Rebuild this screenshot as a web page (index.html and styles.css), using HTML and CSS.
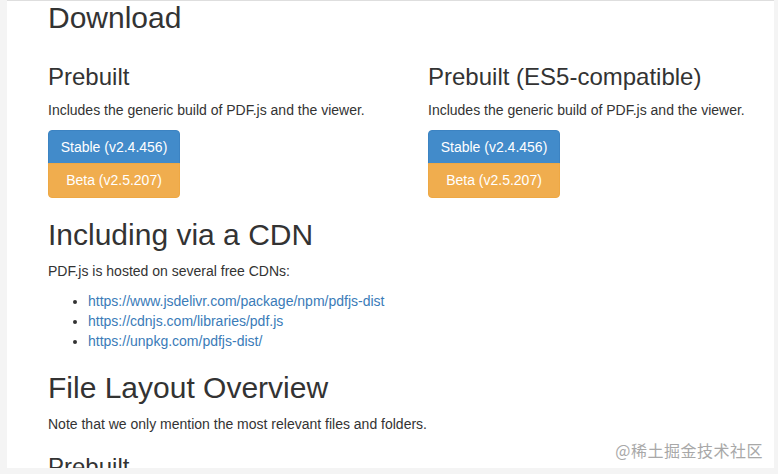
FILE: index.html
```html
<!DOCTYPE html>
<html lang="en">
<head>
<meta charset="utf-8">
<title>PDF.js - Getting Started</title>
<link rel="stylesheet" href="styles.css">
</head>
<body>
<div class="frame">
  <main class="panel">
    <h2 class="first">Download</h2>
    <div class="row">
      <section class="col">
        <h3>Prebuilt</h3>
        <p>Includes the generic build of PDF.js and the viewer.</p>
        <div class="btn-group">
          <a class="btn btn-primary">Stable (v2.4.456)</a>
          <a class="btn btn-warning">Beta (v2.5.207)</a>
        </div>
      </section>
      <section class="col">
        <h3>Prebuilt (ES5-compatible)</h3>
        <p>Includes the generic build of PDF.js and the viewer.</p>
        <div class="btn-group">
          <a class="btn btn-primary">Stable (v2.4.456)</a>
          <a class="btn btn-warning">Beta (v2.5.207)</a>
        </div>
      </section>
    </div>
    <h2>Including via a CDN</h2>
    <p>PDF.js is hosted on several free CDNs:</p>
    <ul>
      <li><a class="link">https://www.jsdelivr.com/package/npm/pdfjs-dist</a></li>
      <li><a class="link">https://cdnjs.com/libraries/pdf.js</a></li>
      <li><a class="link">https://unpkg.com/pdfjs-dist/</a></li>
    </ul>
    <h2>File Layout Overview</h2>
    <p>Note that we only mention the most relevant files and folders.</p>
    <h3>Prebuilt</h3>
  </main>
  <div class="watermark">@稀土掘金技术社区</div>
</div>
</body>
</html>
```

FILE: styles.css
```css
html, body {
  margin: 0;
  padding: 0;
  background: #f4f4f4;
}
body {
  font-family: "Liberation Sans", Arial, Helvetica, sans-serif;
  font-size: 14px;
  line-height: 20px;
  color: #333;
}
.frame {
  position: relative;
  width: 778px;
  height: 474px;
  overflow: hidden;
}
.panel {
  margin-left: 7px;
  width: 767px;
  height: 468px;
  background: #fff;
  border-top: 1px solid #dedede;
  overflow: hidden;
  padding: 0 0 0 41px;
  box-sizing: border-box;
}
h2 {
  font-size: 30px;
  line-height: 33px;
  font-weight: normal;
  margin: 20px 0 10px;
}
h2.first {
  margin-top: 0;
}
h3 {
  font-size: 24px;
  line-height: 26.4px;
  font-weight: normal;
  margin: 20px 0 10px;
}
p {
  margin: 0 0 10px;
}
.row {
  display: grid;
  grid-template-columns: 380px 380px;
}
.btn-group {
  display: flex;
  flex-direction: column;
  width: 132px;
}
.btn {
  display: block;
  height: 34px;
  box-sizing: border-box;
  padding: 6px 0;
  text-align: center;
  color: #fff;
  border: 1px solid transparent;
}
.btn-primary {
  background: #428bca;
  border-color: #3c83c2;
  border-radius: 4px 4px 0 0;
}
.btn-warning {
  background: #f0ad4e;
  border-color: #eea844;
  border-radius: 0 0 4px 4px;
  margin-top: -1px;
  height: 35px;
}
ul {
  margin: 0 0 10px;
  padding-left: 40px;
}
.link {
  color: #3a7bb8;
}
.watermark {
  position: absolute;
  right: 15px;
  bottom: 15px;
  font-family: "Noto Sans CJK SC", "Liberation Sans", sans-serif;
  font-size: 16px;
  line-height: 18px;
  color: #a8a8a8;
  letter-spacing: 0.5px;
}
```
